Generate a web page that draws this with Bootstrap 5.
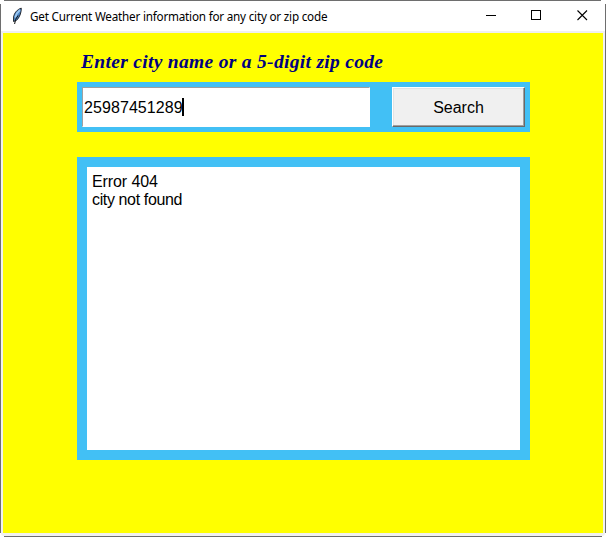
<!DOCTYPE html>
<html lang="en">
<head>
<meta charset="utf-8">
<title>Get Current Weather information for any city or zip code</title>
<link rel="stylesheet" href="https://cdn.jsdelivr.net/npm/bootstrap@5.3.0/dist/css/bootstrap.min.css">
<style>
body{width:606px;height:537px;background:#fff}
.win{width:606px;height:537px;padding:1px;
 background:linear-gradient(#6e6e6e,#6e6e6e) 4px 0/597px 1px no-repeat,linear-gradient(#6e6e6e,#6e6e6e) 4px 536px/598px 1px no-repeat,linear-gradient(#6e6e6e,#6e6e6e) 0 4px/1px 529px no-repeat,linear-gradient(#6e6e6e,#6e6e6e) 605px 4px/1px 529px no-repeat,#fff}
.titlebar{height:30px;padding-left:9px}
.caption{font:11.7px/16px "Noto Sans",sans-serif;color:#000;margin-left:6px;letter-spacing:-.21px;white-space:nowrap}
.winbtn{width:46px;height:30px}
.frame-edge{height:505px;background:#f0f0f0;padding:2px 2px 3px;border-radius:0 0 3px 3px}
.client{height:500px;background:#ff0;padding:16px 73px 0 74px}
.prompt{font:italic bold 19.5px/25px "Liberation Serif",serif;color:#000080;height:33px;padding-left:4px;letter-spacing:.31px;white-space:nowrap}
.sky{background:#42c0f5}
.searchrow{height:50px;padding:5px}
.entry{width:288px;height:40px;border:1px solid #fff;border-top-color:#a0a0a0;border-left-color:#a0a0a0;font:16px/38px "Liberation Sans",sans-serif;color:#000;padding-left:1px}
.entry span:first-child{letter-spacing:.08px;padding-top:2px}
.caret{width:2px;height:18px;background:#000;margin-left:-1px}
.tkbtn{width:133px;height:40px;border-radius:0;border:1px solid;border-color:#fff #696969 #696969 #fff;box-shadow:inset -1px -1px #a0a0a0,inset 1px 1px #e3e3e3;background:#f0f0f0;color:#000;font:16px/38px "Liberation Sans",sans-serif;padding:1px 0 0}
.result{height:303px;margin-top:25px;padding:10px}
.output{height:283px;padding:6px 5px;font:16px/18px "Liberation Sans",sans-serif;color:#000}
.output div{letter-spacing:-.1px}
.output div+div{letter-spacing:-.37px}
</style>
<script src="https://cdn.jsdelivr.net/npm/bootstrap@5.3.0/dist/js/bootstrap.bundle.min.js"></script>
</head>
<body class="m-0 overflow-hidden">
<div class="win">
 <header class="titlebar d-flex align-items-center">
  <svg width="14" height="18" viewBox="0 0 14 18"><path d="M11.3 1.2C7.5 2 4 6.3 3.6 10L3.5 14.5 6.3 13.5C9.6 10.8 11.4 5.5 11.3 1.2Z" fill="#4d86c6" stroke="#17191d" stroke-width=".9"/><path d="M10 3C7.5 5 6 7.5 5.2 10.5" fill="none" stroke="#9cc8f2" stroke-width="1.8"/><path d="M8 8.5Q5 12 4.6 17" fill="none" stroke="#111" stroke-width="1"/></svg>
  <div class="caption">Get Current Weather information for any city or zip code</div>
  <div class="d-flex ms-auto">
   <div class="winbtn"><svg width="46" height="30" shape-rendering="crispEdges"><path d="M19 14h10v1H19z"/></svg></div>
   <div class="winbtn"><svg width="46" height="30"><rect x="18.5" y="9.5" width="9" height="9" fill="none" stroke="#000"/></svg></div>
   <div class="winbtn"><svg width="46" height="30"><path d="M18.5 9.5l9.5 9.5m0-9.5l-9.5 9.5" fill="none" stroke="#000" stroke-width="1.1"/></svg></div>
  </div>
 </header>
 <div class="frame-edge">
  <main class="client">
   <div class="prompt">Enter city name or a 5-digit zip code</div>
   <div class="searchrow sky d-flex justify-content-between">
    <div class="entry bg-white d-flex align-items-center"><span>25987451289</span><span class="caret"></span></div>
    <button type="button" class="btn tkbtn">Search</button>
   </div>
   <div class="result sky"><div class="output bg-white"><div>Error 404</div><div>city not found</div></div></div>
  </main>
 </div>
</div>
</body>
</html>
